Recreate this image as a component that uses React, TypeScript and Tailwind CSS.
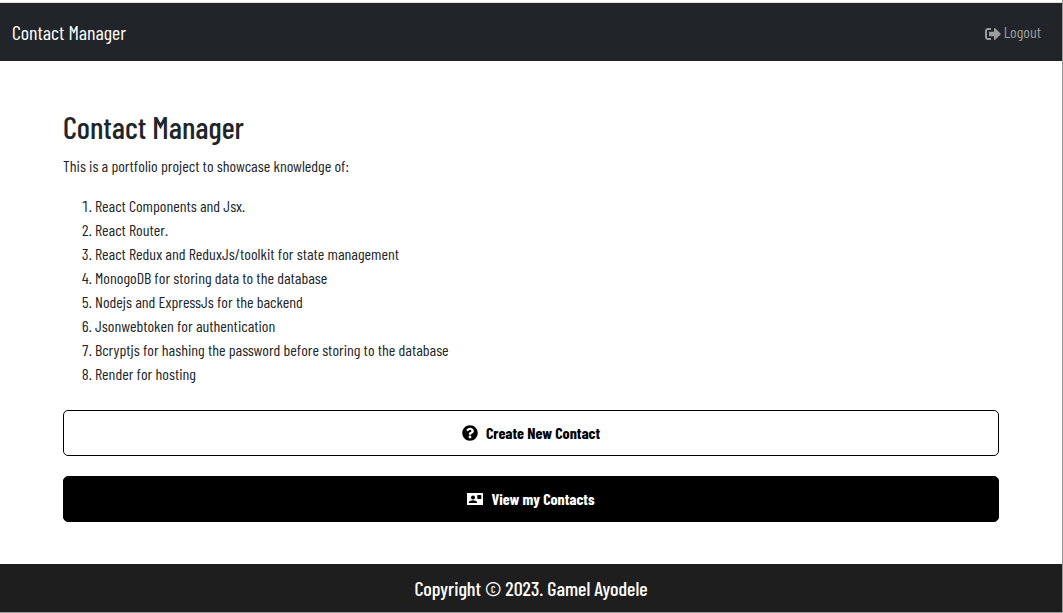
import { FaQuestionCircle, FaSignOutAlt } from "react-icons/fa";

const skills = [
  "React Components and Jsx.",
  "React Router.",
  "React Redux and ReduxJs/toolkit for state management",
  "MonogoDB for storing data to the database",
  "Nodejs and ExpressJs for the backend",
  "Jsonwebtoken for authentication",
  "Bcryptjs for hashing the password before storing to the database",
  "Render for hosting",
];

function ContactCardIcon() {
  return (
    <svg viewBox="0 0 16 16" className="size-4" fill="currentColor" aria-hidden="true">
      <path
        fillRule="evenodd"
        d="M.5 2h15a.5.5 0 0 1 .5.5v11a.5.5 0 0 1-.5.5H.5a.5.5 0 0 1-.5-.5v-11A.5.5 0 0 1 .5 2ZM6 4.5a2 2 0 1 0 0 4 2 2 0 0 0 0-4ZM2 12h8v-.8C10 10 7.4 9.3 6 9.3s-4 .7-4 1.9V12ZM11 4a.7.7 0 0 0-.7.7v2.6c0 .4.3.7.7.7h2.6c.4 0 .7-.3.7-.7V4.7a.7.7 0 0 0-.7-.7H11Z"
      />
    </svg>
  );
}

export default function App() {
  return (
    <div className="flex min-h-screen flex-col border-r border-b border-[#999999] bg-white pt-[2px] font-['Barlow_Condensed','Roboto_Condensed','Liberation_Sans_Narrow',Roboto,sans-serif] text-[#212529]">
      <nav className="flex h-[59px] items-center justify-between border-t border-[#dee2e6] bg-[#212529] pr-[21px] pl-3">
        <a href="#home" className="text-xl text-white">
          Contact Manager
        </a>
        <a href="#logout" className="text-base text-[#9b9d9e]">
          <FaSignOutAlt className="inline align-middle" aria-hidden="true" /> Logout
        </a>
      </nav>

      <main className="flex-1 px-[63px] pt-12">
        <h1 className="mb-[10px] text-[31px] leading-[35px] font-medium">Contact Manager</h1>
        <p className="mb-4 text-base">This is a portfolio project to showcase knowledge of:</p>
        <ol className="mb-6 list-decimal pl-8 text-base">
          {skills.map((skill) => (
            <li key={skill}>{skill}</li>
          ))}
        </ol>
        <div className="flex flex-col gap-5 pb-10">
          <button
            type="button"
            className="flex h-[46px] w-full items-center justify-center gap-2 rounded-[5px] border border-black bg-white text-base font-bold text-black"
          >
            <FaQuestionCircle aria-hidden="true" />
            Create New Contact
          </button>
          <button
            type="button"
            className="flex h-[46px] w-full items-center justify-center gap-2 rounded-[5px] border border-black bg-black text-base font-bold text-white"
          >
            <ContactCardIcon />
            View my Contacts
          </button>
        </div>
      </main>

      <footer className="flex h-12 items-center justify-center bg-[#1e1e1e] text-xl font-medium text-white">
        Copyright © 2023. Gamel Ayodele
      </footer>
    </div>
  );
}
